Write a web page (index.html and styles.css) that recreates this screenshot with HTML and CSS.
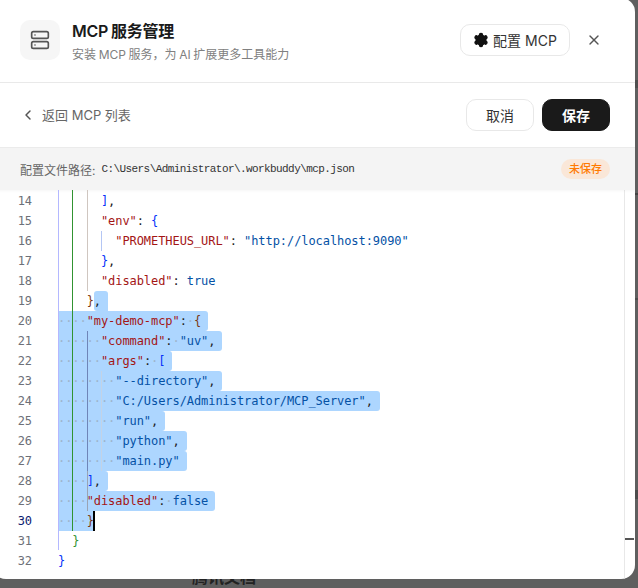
FILE: index.html
```html
<!DOCTYPE html>
<html lang="zh-CN">
<head>
<meta charset="utf-8">
<title>MCP 服务管理</title>
<link rel="stylesheet" href="styles.css">
</head>
<body>
<div class="backdrop">
  <span class="behind behind-title">腾讯文档</span>
  <i class="tick tick-a"></i>
  <i class="tick tick-b"></i>
  <i class="tick tick-c"></i>
  <i class="tick tick-d"></i>
  <div class="modal">
    <header class="head">
      <div class="head-icon">
        <svg width="20" height="20" viewBox="0 0 24 24" fill="none" stroke="#555" stroke-width="2" stroke-linecap="round" stroke-linejoin="round"><rect x="2" y="2" width="20" height="8" rx="2"/><rect x="2" y="14" width="20" height="8" rx="2"/><line x1="6" y1="6" x2="6.01" y2="6"/><line x1="6" y1="18" x2="6.01" y2="18"/></svg>
      </div>
      <div class="head-text">
        <h1 class="title">MCP 服务管理</h1>
        <p class="subtitle">安装 MCP 服务，为 AI 扩展更多工具能力</p>
      </div>
      <button class="btn btn-config">
        <svg width="16" height="16" viewBox="0 0 24 24" fill="#111" stroke="#111" stroke-width="2" stroke-linejoin="round"><circle cx="12" cy="12" r="7"/><path d="M12.22 2h-.44a2 2 0 0 0-2 2v.18a2 2 0 0 1-1 1.73l-.43.25a2 2 0 0 1-2 0l-.15-.08a2 2 0 0 0-2.73.73l-.22.38a2 2 0 0 0 .73 2.73l.15.1a2 2 0 0 1 1 1.72v.51a2 2 0 0 1-1 1.74l-.15.09a2 2 0 0 0-.73 2.73l.22.38a2 2 0 0 0 2.73.73l.15-.08a2 2 0 0 1 2 0l.43.25a2 2 0 0 1 1 1.73V20a2 2 0 0 0 2 2h.44a2 2 0 0 0 2-2v-.18a2 2 0 0 1 1-1.73l.43-.25a2 2 0 0 1 2 0l.15.08a2 2 0 0 0 2.73-.73l.22-.39a2 2 0 0 0-.73-2.73l-.15-.08a2 2 0 0 1-1-1.74v-.5a2 2 0 0 1 1-1.74l.15-.09a2 2 0 0 0 .73-2.73l-.22-.38a2 2 0 0 0-2.73-.73l-.15.08a2 2 0 0 1-2 0l-.43-.25a2 2 0 0 1-1-1.73V4a2 2 0 0 0-2-2z"/></svg>
        <span>配置 MCP</span>
      </button>
      <button class="close" aria-label="关闭">
        <svg width="16" height="16" viewBox="0 0 24 24" fill="none" stroke="#555" stroke-width="2" stroke-linecap="round"><path d="M18 6 6 18"/><path d="m6 6 12 12"/></svg>
      </button>
    </header>

    <div class="toolbar">
      <a class="back">
        <svg width="16" height="16" viewBox="0 0 24 24" fill="none" stroke="#555" stroke-width="2.2" stroke-linecap="round" stroke-linejoin="round"><path d="m15 18-6-6 6-6"/></svg>
        <span class="back-text">返回 MCP 列表</span>
      </a>
      <div class="actions">
        <button class="btn btn-action">取消</button>
        <button class="btn btn-action btn-dark">保存</button>
      </div>
    </div>

    <div class="pathbar">
      <span class="path-label">配置文件路径:</span>
      <code class="path">C:\Users\Administrator\.workbuddy\mcp.json</code>
      <span class="badge">未保存</span>
    </div>

    <div class="editor">
      <div class="code">
        <i class="guide g0"></i>
        <i class="guide g1"></i>
        <i class="guide g2a"></i>
        <i class="guide g2b"></i>
        <i class="guide g2c"></i>
        <i class="guide g3a"></i>
        <i class="guide g3b"></i>
        <i class="caret"></i>
        <div class="ln"><b>14</b><pre>      <u class="k-b">]</u>,</pre></div>
        <div class="ln"><b>15</b><pre>      <u class="k-s">"env"</u>: <u class="k-b">{</u></pre></div>
        <div class="ln"><b>16</b><pre>        <u class="k-s">"PROMETHEUS_URL"</u>: <u class="k-v">"http://localhost:9090"</u></pre></div>
        <div class="ln"><b>17</b><pre>      <u class="k-b">}</u>,</pre></div>
        <div class="ln"><b>18</b><pre>      <u class="k-s">"disabled"</u>: <u class="k-v">true</u></pre></div>
        <div class="ln"><b>19</b><pre>    <u class="k-br">}</u><span class="sel sel-mid">,</span></pre></div>
        <div class="ln"><b>20</b><pre><span class="sel"><s>····</s><u class="k-s">"my-demo-mcp"</u>:<s>·</s><u class="k-br">{</u></span></pre></div>
        <div class="ln"><b>21</b><pre><span class="sel"><s>······</s><u class="k-s">"command"</u>:<s>·</s><u class="k-v">"uv"</u>,</span></pre></div>
        <div class="ln"><b>22</b><pre><span class="sel"><s>······</s><u class="k-s">"args"</u>:<s>·</s><u class="k-b">[</u></span></pre></div>
        <div class="ln"><b>23</b><pre><span class="sel"><s>········</s><u class="k-v">"--directory"</u>,</span></pre></div>
        <div class="ln"><b>24</b><pre><span class="sel"><s>········</s><u class="k-v">"C:/Users/Administrator/MCP_Server"</u>,</span></pre></div>
        <div class="ln"><b>25</b><pre><span class="sel"><s>········</s><u class="k-v">"run"</u>,</span></pre></div>
        <div class="ln"><b>26</b><pre><span class="sel"><s>········</s><u class="k-v">"python"</u>,</span></pre></div>
        <div class="ln"><b>27</b><pre><span class="sel"><s>········</s><u class="k-v">"main.py"</u></span></pre></div>
        <div class="ln"><b>28</b><pre><span class="sel"><s>····</s><u class="k-b">]</u>,</span></pre></div>
        <div class="ln"><b>29</b><pre><span class="sel"><s>····</s><u class="k-s">"disabled"</u>:<s>·</s><u class="k-v">false</u></span></pre></div>
        <div class="ln ln-active"><b>30</b><pre><span class="sel sel-end"><s>····</s><u class="k-br">}</u></span></pre></div>
        <div class="ln"><b>31</b><pre>  <u class="k-g">}</u></pre></div>
        <div class="ln"><b>32</b><pre><u class="k-b">}</u></pre></div>
      </div>
      <div class="overview"><i class="mark"></i></div>
    </div>
  </div>
</div>
</body>
</html>
```
FILE: styles.css
```css
* { box-sizing: border-box; }
html, body { margin: 0; padding: 0; }
body { font-family: Inter, "Noto Sans CJK SC", sans-serif; }

.backdrop {
  position: relative;
  width: 638px;
  height: 588px;
  overflow: hidden;
  background: #5f5f5f;
}
.behind {
  position: absolute;
  color: #222;
  font-weight: 700;
  font-size: 16px;
  line-height: 20px;
  white-space: nowrap;
}
.behind-title { left: 192px; top: 567px; }
.tick { position: absolute; left: 635px; width: 3px; background: #444; }
.tick-a { top: 80px; height: 8px; opacity: .6; }
.tick-b { top: 193px; height: 2px; }
.tick-c { top: 298px; height: 2px; opacity: .7; }
.tick-d { top: 490px; height: 9px; opacity: .7; }

.modal {
  position: absolute;
  left: -8px;
  top: -2px;
  width: 643px;
  height: 581px;
  background: #fff;
  border-radius: 14px;
  overflow: hidden;
  display: flex;
  flex-direction: column;
}

/* header */
.head {
  flex: none;
  height: 85px;
  padding: 0 33px 0 28px;
  border-bottom: 1px solid #e9e9e9;
  display: flex;
  align-items: center;
}
.head-icon {
  width: 40px;
  height: 40px;
  border-radius: 10px;
  background: #f6f6f6;
  display: flex;
  align-items: center;
  justify-content: center;
  margin-right: 12px;
}
.head-text { flex: 1; min-width: 0; padding-top: 2px; }
.title {
  margin: 0;
  font-size: 16px;
  line-height: 22px;
  font-weight: 600;
  color: #1a1a1a;
  word-spacing: -.6px;
  letter-spacing: -.3px;
}
.subtitle {
  margin: 5px 0 0;
  font-size: 12px;
  line-height: 16px;
  color: #808080;
  word-spacing: -.75px;
}
.btn {
  font-family: inherit;
  background: #fff;
  border: 1px solid #e8e8e8;
  border-radius: 10px;
  height: 32px;
  padding: 0;
  font-size: 14px;
  color: #333;
  display: flex;
  align-items: center;
  justify-content: center;
}
.btn-config { width: 110px; gap: 4px; }
.close {
  width: 16px;
  height: 16px;
  margin-left: 16px;
  padding: 0;
  border: 0;
  background: none;
  display: flex;
}

/* toolbar */
.toolbar {
  flex: none;
  height: 65px;
  padding: 0 25px 0 28px;
  border-bottom: 1px solid #ececec;
  display: flex;
  align-items: center;
  justify-content: space-between;
}
.back {
  display: flex;
  align-items: center;
  gap: 6px;
  font-size: 13px;
  color: #666;
}
.back-text { margin-top: -2px; }
.actions { display: flex; gap: 8px; }
.btn-action { width: 68px; font-weight: 400; }
.btn-dark {
  background: #1a1a1a;
  border-color: #1a1a1a;
  color: #fff;
  font-weight: 600;
}

/* path bar */
.pathbar {
  flex: none;
  height: 42px;
  padding: 0 25px 0 28px;
  background: #f4f4f4;
  display: flex;
  align-items: center;
  font-size: 12px;
  color: #666;
  box-shadow: 0 1px 3px rgba(0, 0, 0, .04);
  position: relative;
  z-index: 1;
}
.path-label { margin-right: 6px; }
.path {
  flex: 1;
  font-family: "Liberation Mono", monospace;
  font-size: 11px;
  letter-spacing: -.58px;
  color: #333;
}
.badge {
  height: 20px;
  width: 49px;
  border-radius: 10px;
  background: #fae7d8;
  color: #ff7a00;
  font-size: 11px;
  line-height: 20px;
  text-align: center;
  font-weight: 500;
}

/* editor */
.editor {
  flex: 1;
  min-height: 0;
  display: flex;
  overflow: hidden;
}
.code {
  position: relative;
  flex: 1;
  padding-top: 1px;
}
.ln {
  display: flex;
  height: 20px;
  line-height: 20px;
  font-family: "DejaVu Sans Mono", monospace;
  font-size: 12px;
  letter-spacing: -.07px;
}
.ln b {
  flex: none;
  width: 40px;
  margin-right: 26px;
  text-align: right;
  font-weight: 400;
  color: #6d7078;
}
.ln-active b { color: #0b216f; }
.ln pre {
  margin: 0;
  font: inherit;
  letter-spacing: inherit;
  color: #222;
  white-space: pre;
}
.ln u { text-decoration: none; }
.ln s { text-decoration: none; color: #9db4cc; }
.k-s { color: #a31515; }
.k-v { color: #0451a5; }
.k-b { color: #0431fa; }
.k-g { color: #319331; }
.k-br { color: #7b3814; }
.sel {
  display: inline-block;
  height: 20px;
  padding-right: 7px;
  background: #add6ff;
  border-radius: 0 3px 3px 0;
}
.sel-mid { border-radius: 3px 3px 0 3px; }
.sel-end { padding-right: 0; border-radius: 0 0 0 0; }

.guide { position: absolute; width: 1px; z-index: 1; }
.g0 { left: 66px; top: 0; height: 360px; background: #b4b8ff; }
.g1 { left: 80px; top: 0; height: 341px; background: #319331; }
.g2a { left: 95px; top: 0; height: 101px; background: #cfc6c0; }
.g2b { left: 95px; top: 141px; height: 140px; background: #6f85b8; }
.g2c { left: 95px; top: 281px; height: 40px; background: #9aa3b4; }
.g3a { left: 109px; top: 41px; height: 20px; background: #b4c6f4; }
.g3b { left: 109px; top: 181px; height: 100px; background: #c3d3e6; }
.caret {
  position: absolute;
  left: 101px;
  top: 321px;
  width: 2px;
  height: 20px;
  background: #000;
  z-index: 2;
}

.overview {
  flex: none;
  position: relative;
  width: 11px;
  border-left: 1px solid #e8e8e8;
}
.mark {
  position: absolute;
  left: 0;
  right: 1px;
  top: 348px;
  height: 2px;
  background: #555;
}
```
